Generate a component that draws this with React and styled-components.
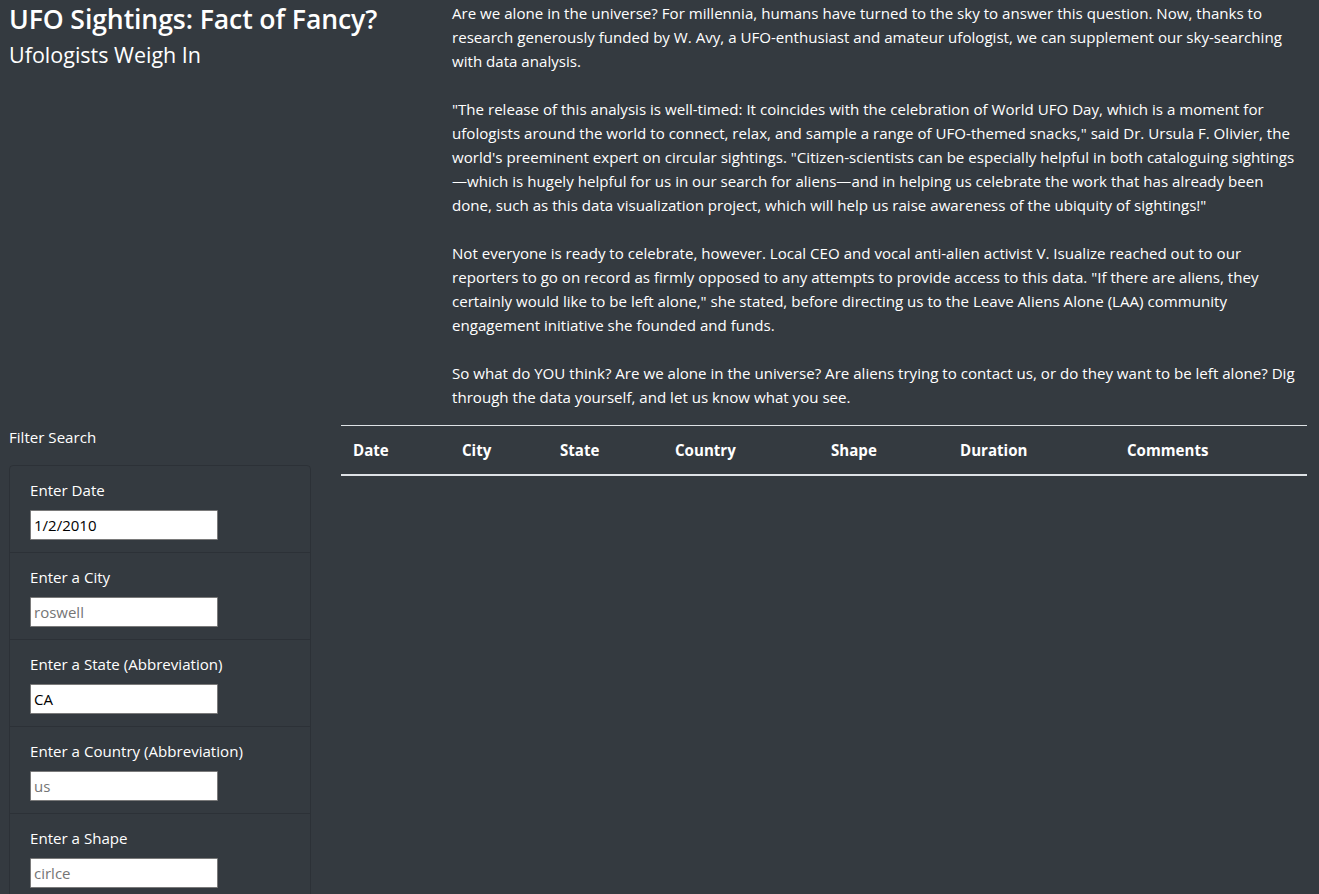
import React from "react";
import styled, { createGlobalStyle } from "styled-components";

const GlobalStyle = createGlobalStyle`
  html, body {
    margin: 0;
    padding: 0;
    background: #343a40;
  }
  body {
    color: #fff;
    font-family: "Open Sans", "Noto Sans", sans-serif;
    font-size: 15.1px;
    line-height: 24px;
  }
  * { box-sizing: border-box; }
`;

const Page = styled.div`
  background: #343a40;
  min-height: 100vh;
`;

const Row = styled.div`
  display: grid;
  grid-template-columns: ${(p) => p.$left}px 1fr;
  column-gap: 30px;
  padding: ${(p) => p.$top || 0}px ${(p) => p.$right || 12}px 0 9px;
`;

const HeaderCol = styled.div`
  display: flex;
  flex-direction: column;
`;

const Title = styled.h1`
  margin: 2px 0 0;
  font-size: 26.6px;
  font-weight: 600;
  line-height: 32px;
  letter-spacing: -0.1px;
`;

const Subtitle = styled.h2`
  margin: 5px 0 0;
  font-size: 21.5px;
  font-weight: 400;
  line-height: 29px;
`;

const Paragraph = styled.p`
  margin: 0 0 24px;
  &:last-child {
    margin-bottom: 16px;
  }
`;

const FilterHeading = styled.div`
  line-height: 24px;
  margin-bottom: 16px;
`;

const FilterList = styled.ul`
  list-style: none;
  margin: 0;
  padding: 0;
  border: 1px solid rgba(0, 0, 0, 0.14);
  border-radius: 4px;
`;

const FilterItem = styled.li`
  padding: 12px 20px;
  border-bottom: 1px solid rgba(0, 0, 0, 0.14);
  &:last-child {
    border-bottom: none;
  }
`;

const Label = styled.label`
  display: block;
  line-height: 24px;
  margin-bottom: 8px;
`;

const Input = styled.input`
  display: block;
  width: 188px;
  height: 30px;
  margin: 0;
  padding: 1px 3px;
  border: 1px solid #7a7a7a;
  border-radius: 1px;
  background: #fff;
  color: #000;
  font-family: "Open Sans", "Noto Sans", sans-serif;
  font-size: 15px;
  outline: none;
  &::placeholder {
    color: #757575;
    opacity: 1;
  }
`;

const Table = styled.table`
  width: 100%;
  border-collapse: collapse;
  color: #fff;
`;

const Th = styled.th`
  width: ${(p) => (p.$w ? `${p.$w}px` : "auto")};
  padding: 12px;
  text-align: left;
  font-weight: 700;
  line-height: 24px;
  border-top: 1px solid #dee2e6;
  border-bottom: 2px solid #dee2e6;
`;

const columns = [
  ["Date", 109],
  ["City", 98],
  ["State", 115],
  ["Country", 156],
  ["Shape", 129],
  ["Duration", 167],
  ["Comments", null],
];

const filters = [
  { id: "datetime", label: "Enter Date", value: "1/2/2010" },
  { id: "city", label: "Enter a City", placeholder: "roswell" },
  { id: "state", label: "Enter a State (Abbreviation)", value: "CA" },
  { id: "country", label: "Enter a Country (Abbreviation)", placeholder: "us" },
  { id: "shape", label: "Enter a Shape", placeholder: "cirlce" },
];

export default function App() {
  return (
    <Page>
      <GlobalStyle />
      <Row $left={413} $top={1} $right={14}>
        <HeaderCol>
          <Title>UFO Sightings: Fact of Fancy?</Title>
          <Subtitle>Ufologists Weigh In</Subtitle>
        </HeaderCol>
        <div>
          <Paragraph>
            Are we alone in the universe? For millennia, humans have turned to the sky to answer this
            question. Now, thanks to research generously funded by W. Avy, a UFO-enthusiast and amateur
            ufologist, we can supplement our sky-searching with data analysis.
          </Paragraph>
          <Paragraph>
            "The release of this analysis is well-timed: It coincides with the celebration of World UFO
            Day, which is a moment for ufologists around the world to connect, relax, and sample a range
            of UFO-themed snacks," said Dr. Ursula F. Olivier, the world's preeminent expert on circular
            sightings. "Citizen-scientists can be especially helpful in both cataloguing sightings
            —which is hugely helpful for us in our search for aliens—and in helping us celebrate the
            work that has already been done, such as this data visualization project, which will help
            us raise awareness of the ubiquity of sightings!"
          </Paragraph>
          <Paragraph>
            Not everyone is ready to celebrate, however. Local CEO and vocal anti-alien activist V.
            Isualize reached out to our reporters to go on record as firmly opposed to any attempts to
            provide access to this data. "If there are aliens, they certainly would like to be left
            alone," she stated, before directing us to the Leave Aliens Alone (LAA) community engagement
            initiative she founded and funds.
          </Paragraph>
          <Paragraph>
            So what do YOU think? Are we alone in the universe? Are aliens trying to contact us, or do
            they want to be left alone? Dig through the data yourself, and let us know what you see.
          </Paragraph>
        </div>
      </Row>
      <Row $left={302}>
        <div>
          <FilterHeading>Filter Search</FilterHeading>
          <FilterList>
            {filters.map((f) => (
              <FilterItem key={f.id}>
                <Label htmlFor={f.id}>{f.label}</Label>
                <Input
                  id={f.id}
                  type="text"
                  defaultValue={f.value}
                  placeholder={f.placeholder}
                />
              </FilterItem>
            ))}
          </FilterList>
        </div>
        <div>
          <Table>
            <thead>
              <tr>
                {columns.map(([name, w]) => (
                  <Th key={name} $w={w}>
                    {name}
                  </Th>
                ))}
              </tr>
            </thead>
            <tbody />
          </Table>
        </div>
      </Row>
    </Page>
  );
}
